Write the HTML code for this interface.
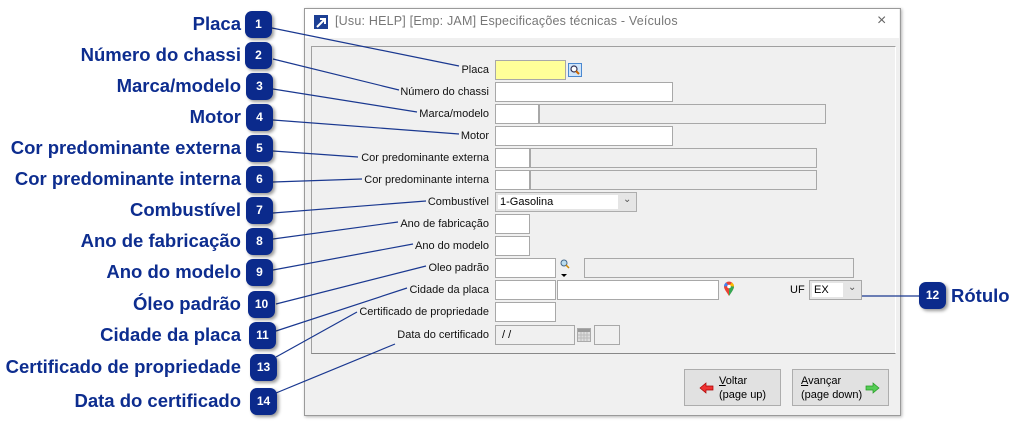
<!DOCTYPE html><html><head><meta charset="utf-8"><style>
body{margin:0;width:1024px;height:429px;background:#fff;position:relative;overflow:hidden;font-family:"Liberation Sans",sans-serif}
.a{position:absolute}
.c{position:absolute;right:783px;font:bold 18.5px "Liberation Sans",sans-serif;color:#0d2d8f;white-space:nowrap;line-height:20px}
.b{position:absolute;width:27px;height:27px;border-radius:7px;background:#0b2a8c;color:#fff;font:bold 12px "Liberation Sans",sans-serif;text-align:center;line-height:27px;box-shadow:2px 2px 3px rgba(0,0,0,.4)}
.l{position:absolute;right:535px;font-size:11px;color:#111;white-space:nowrap;line-height:13px}
.f{position:absolute;height:20px;box-sizing:border-box;border:1px solid #a8a8a8;background:#fff}
.g{background:#f0f0f0}
</style></head><body>
<div class="a" style="left:304px;top:8px;width:595px;height:406px;background:#f0f0f0;border:1px solid #9a9a9a;box-shadow:1px 1px 3px rgba(0,0,0,.3)"></div>
<div class="a" style="left:305px;top:9px;width:594px;height:29px;background:#fff"></div>
<svg class="a" style="left:314px;top:15px" width="14" height="14"><rect width="14" height="14" fill="#1c3f94"/><path d="M3 12L11 4M6 4h5v5" stroke="#fff" stroke-width="2" fill="none"/></svg>
<div class="a" style="left:335px;top:14px;font-size:12.5px;color:#777;letter-spacing:.2px">[Usu: HELP] [Emp: JAM] Especificações técnicas - Veículos</div>
<div class="a" style="left:877px;top:12px;font-size:16px;color:#666">×</div>
<div class="a" style="left:311px;top:46px;width:585px;height:308px;border:1px solid #a0a0a0;border-right-color:#fff;border-bottom-color:#888;box-sizing:border-box"></div>

<div class="l" style="top:64px">Placa</div>
<div class="f" style="left:495px;top:60px;width:71px;background:#ffff99"></div>
<svg class="a" style="left:568px;top:63px" width="14" height="14"><rect x=".5" y=".5" width="13" height="13" fill="#cfe5fb" stroke="#4a88d0"/><circle cx="6" cy="6" r="3" fill="#fff" stroke="#335" stroke-width="1.2"/><path d="M8 8l3 3" stroke="#c60" stroke-width="2"/></svg>
<div class="l" style="top:86px">Número do chassi</div>
<div class="f" style="left:495px;top:82px;width:178px"></div>
<div class="l" style="top:108px">Marca/modelo</div>
<div class="f" style="left:495px;top:104px;width:44px"></div><div class="f g" style="left:539px;top:104px;width:287px"></div>
<div class="l" style="top:130px">Motor</div>
<div class="f" style="left:495px;top:126px;width:178px"></div>
<div class="l" style="top:152px">Cor predominante externa</div>
<div class="f" style="left:495px;top:148px;width:35px"></div><div class="f g" style="left:530px;top:148px;width:287px"></div>
<div class="l" style="top:174px">Cor predominante interna</div>
<div class="f" style="left:495px;top:170px;width:35px"></div><div class="f g" style="left:530px;top:170px;width:287px"></div>
<div class="l" style="top:196px">Combustível</div>
<div class="f" style="left:495px;top:192px;width:142px;background:#e5e5e5;border-color:#adadad"><div class="a" style="left:2px;top:2px;width:120px;height:14px;background:#fff;font-size:11px;line-height:14px;padding-left:2px;box-sizing:border-box">1-Gasolina</div><div class="a" style="left:127px;top:1px;font-size:10px;color:#555">&#8964;</div></div>
<div class="l" style="top:218px">Ano de fabricação</div>
<div class="f" style="left:495px;top:214px;width:35px"></div>
<div class="l" style="top:240px">Ano do modelo</div>
<div class="f" style="left:495px;top:236px;width:35px"></div>
<div class="l" style="top:262px">Oleo padrão</div>
<div class="f" style="left:495px;top:258px;width:61px"></div>
<svg class="a" style="left:559px;top:258px" width="12" height="20"><circle cx="5" cy="5" r="3" fill="#bde" stroke="#468"/><path d="M7 7l3 3" stroke="#c80" stroke-width="1.5"/><path d="M2 16h6l-3 3z" fill="#000"/></svg>
<div class="f g" style="left:584px;top:258px;width:270px"></div>
<div class="l" style="top:284px">Cidade da placa</div>
<div class="f" style="left:495px;top:280px;width:61px"></div><div class="f" style="left:557px;top:280px;width:162px"></div>
<svg class="a" style="left:723px;top:281px" width="12" height="16"><path d="M6 15C3 10 1 8 1 5.5a5 5 0 0110 0C11 8 9 10 6 15z" fill="#ea4335"/><path d="M1 5.5a5 5 0 012-4L6 5z" fill="#4285f4"/><path d="M6 15C8 12 11 8 11 5.5L6 5z" fill="#34a853"/><path d="M11 5.5a5 5 0 00-2-4L6 5z" fill="#fbbc04"/><circle cx="6" cy="5.5" r="1.8" fill="#fff"/></svg>
<div class="a" style="left:790px;top:284px;font-size:11px">UF</div>
<div class="f" style="left:809px;top:280px;width:53px;background:#e5e5e5"><div class="a" style="left:2px;top:2px;width:31px;height:14px;background:#fff;font-size:11px;line-height:14px;padding-left:2px;box-sizing:border-box">EX</div><div class="a" style="left:38px;top:1px;font-size:10px;color:#555">&#8964;</div></div>
<div class="l" style="top:306px">Certificado de propriedade</div>
<div class="f" style="left:495px;top:302px;width:61px"></div>
<div class="l" style="top:329px">Data do certificado</div>
<div class="f g" style="left:495px;top:325px;width:80px;font-size:11px;line-height:18px;padding-left:6px">/ /</div>
<svg class="a" style="left:577px;top:327px" width="14" height="15"><rect x=".5" y="1.5" width="13" height="13" fill="#ddd" stroke="#aaa"/><rect x="1" y="2" width="12" height="3" fill="#999"/><path d="M1 8h12M1 11h12M4 5v9M7 5v9M10 5v9" stroke="#bbb"/></svg>
<div class="f g" style="left:594px;top:325px;width:26px"></div>

<div class="a" style="left:684px;top:369px;width:97px;height:37px;border:1px solid #adadad;background:#e1e1e1;box-sizing:border-box"></div>
<svg class="a" style="left:699px;top:382px" width="15" height="12"><path d="M1 6l6-5v3h7v4H7v3z" fill="#e33" stroke="#a00" stroke-width=".7"/></svg>
<div class="a" style="left:719px;top:374px;font-size:11px;line-height:14px"><u>V</u>oltar<br>(page up)</div>
<div class="a" style="left:792px;top:369px;width:97px;height:37px;border:1px solid #adadad;background:#e1e1e1;box-sizing:border-box"></div>
<svg class="a" style="left:865px;top:382px" width="15" height="12"><path d="M14 6l-6-5v3H1v4h7v3z" fill="#5c5" stroke="#292" stroke-width=".7"/></svg>
<div class="a" style="left:801px;top:374px;font-size:11px;line-height:14px"><u>A</u>vançar<br>(page down)</div>

<svg class="a" style="left:0;top:0" width="1024" height="429"><g stroke="#1a3890" stroke-width="1.2" fill="none">
<path d="M272 28L459 66"/><path d="M273 59L399 90"/><path d="M273 89L417 112"/><path d="M273 120L459 134"/><path d="M273 151L358 157"/><path d="M273 182L362 179"/><path d="M273 213L426 201"/><path d="M273 239L398 222"/><path d="M273 270L413 244"/><path d="M276 304L426 266"/><path d="M276 331L407 288"/><path d="M276 357L357 312"/><path d="M276 393L395 344"/><path d="M862 296L919 296"/></g></svg>

<div class="c" style="top:14px">Placa</div><div class="b" style="left:245px;top:11px">1</div>
<div class="c" style="top:45px">Número do chassi</div><div class="b" style="left:245px;top:42px">2</div>
<div class="c" style="top:76px">Marca/modelo</div><div class="b" style="left:246px;top:73px">3</div>
<div class="c" style="top:107px">Motor</div><div class="b" style="left:246px;top:104px">4</div>
<div class="c" style="top:138px">Cor predominante externa</div><div class="b" style="left:246px;top:135px">5</div>
<div class="c" style="top:169px">Cor predominante interna</div><div class="b" style="left:246px;top:166px">6</div>
<div class="c" style="top:200px">Combustível</div><div class="b" style="left:246px;top:197px">7</div>
<div class="c" style="top:231px">Ano de fabricação</div><div class="b" style="left:246px;top:228px">8</div>
<div class="c" style="top:262px">Ano do modelo</div><div class="b" style="left:246px;top:259px">9</div>
<div class="c" style="top:294px">Óleo padrão</div><div class="b" style="left:248px;top:291px">10</div>
<div class="c" style="top:325px">Cidade da placa</div><div class="b" style="left:249px;top:322px">11</div>
<div class="c" style="top:357px">Certificado de propriedade</div><div class="b" style="left:250px;top:354px">13</div>
<div class="c" style="top:391px">Data do certificado</div><div class="b" style="left:250px;top:388px">14</div>
<div class="b" style="left:919px;top:282px">12</div><div class="a" style="left:951px;top:285px;font:bold 18.5px 'Liberation Sans',sans-serif;color:#0d2d8f">Rótulo</div>
</body></html>
